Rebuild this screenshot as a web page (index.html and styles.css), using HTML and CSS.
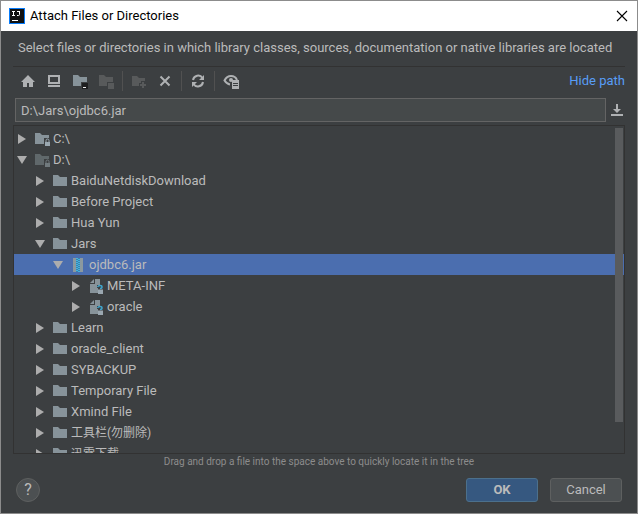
FILE: index.html
```html
<!DOCTYPE html>
<html lang="en">
<head>
<meta charset="utf-8">
<title>Attach Files or Directories</title>
<link rel="stylesheet" href="styles.css">
</head>
<body>
<svg class="defs" aria-hidden="true">
  <symbol id="folder" viewBox="0 0 16 16"><path d="M1 2h5l2 2h7v9H1z" fill="currentColor"/></symbol>
  <symbol id="drive" viewBox="0 0 16 16"><path d="M1 2h5l2 2h7v3h-5v6H1z" fill="currentColor"/><path d="M11 11h5v4h-5z" fill="var(--lock)"/><path d="M12 11V9.500a1.500 1.500 0 0 1 3 0V11" fill="none" stroke="var(--lock)"/></symbol>
  <symbol id="jar" viewBox="0 0 16 16"><path d="M3 1h3v14H3zM10 1h3v14h-3z" fill="#8b999f"/><path d="M6 1h4v14H6z" fill="#3d7fae"/><path d="M6 1h2v1H6zM8 2h2v1H8zM6 3h2v1H6zM8 4h2v1H8zM6 5h2v1H6zM8 6h2v1H8zM6 7h2v1H6zM8 8h2v1H8zM6 9h2v1H6zM8 10h2v1H8zM6 11h2v1H6zM8 12h2v1H8zM6 13h2v1H6zM8 14h2v1H8z" fill="#40b6e0"/></symbol>
  <symbol id="entry" viewBox="0 0 16 16"><path d="M7 1h5v6H9v3h1v5H2V6h5z" fill="#87939a"/><path d="M2 5l4-4v4z" fill="#87939a"/><path d="M9.500 9c1-2 4.500-2 4.500 0 0 1-1 1.500-2 1.500" fill="none" stroke="#40a5cc" stroke-width="1.500"/><path d="M10 11.500h5V16h-5z" fill="#9aa7b0"/></symbol>
  <symbol id="right" viewBox="0 0 10 10"><path d="M1 0l8 5-8 5z" fill="#adadad"/></symbol>
  <symbol id="down" viewBox="0 0 10 10"><path d="M0 1h10L5 9z" fill="#adadad"/></symbol>
</svg>
<main class="dialog">
  <header class="titlebar">
    <svg class="logo" viewBox="0 0 16 16"><path fill="#087cfa" d="M0 0h16v16H0z"/><path fill="#111" d="M1 1h14v14H1z"/><path d="M3 3.500h3M4.500 3v5M3 7.500h3M8 3.500h3M10.500 3v3.500q0 1-1 1H8" fill="none" stroke="#fff"/><path d="M3 12h6v1H3z" fill="#fff"/></svg>
    <h1 class="title">Attach Files or Directories</h1>
    <button class="close" aria-label="Close"><svg viewBox="0 0 12 12"><path d="M1 1l10 10M11 1L1 11" stroke="#000" stroke-width="1.100"/></svg></button>
  </header>
  <div class="content">
    <p class="description">Select files or directories in which library classes, sources, documentation or native libraries are located</p>
    <nav class="toolbar" aria-label="File chooser">
      <button class="tool" aria-label="Home"><svg viewBox="0 0 16 16"><path d="M8 2l7 7h-2v5h-4v-4H7v4H3V9H1z" fill="currentColor"/></svg></button>
      <button class="tool" aria-label="Desktop"><svg viewBox="0 0 16 16"><path d="M2 2h12v9H2zM4 4v5h8V4zM2 12h12v2H2z" fill="currentColor" fill-rule="evenodd"/></svg></button>
      <button class="tool" aria-label="Project directory"><svg viewBox="0 0 16 16"><path d="M1 2h5l2 2h7v5H9v4H1z" fill="#87939a"/><path d="M10 10h6v6h-6z" fill="#1e1f20"/><path d="M11 14h3v1h-3z" fill="#eee"/></svg></button>
      <button class="tool" aria-label="Module directory" disabled><svg viewBox="0 0 16 16"><path d="M1 2h5l2 2h7v5H9v4H1zM10 10h6v6h-6z" fill="currentColor"/></svg></button>
      <span class="divider"></span>
      <button class="tool" aria-label="New folder" disabled><svg viewBox="0 0 16 16"><path d="M1 3h5l2 2h6v3h-4v2H8v3H1zM11 9h2v2h2v2h-2v2h-2v-2H9v-2h2z" fill="currentColor"/></svg></button>
      <button class="tool" aria-label="Delete"><svg viewBox="0 0 16 16"><path d="M3.500 3.500l9 9M12.500 3.500l-9 9" stroke="currentColor" stroke-width="2"/></svg></button>
      <span class="divider"></span>
      <button class="tool" aria-label="Refresh"><svg viewBox="0 0 16 16"><path d="M3 7a5.200 5.200 0 0 1 9.500-2M13 9a5.200 5.200 0 0 1-9.500 2" fill="none" stroke="currentColor" stroke-width="2"/><path d="M14 2v5H9zM2 14V9h5z" fill="currentColor"/></svg></button>
      <span class="divider"></span>
      <button class="tool" aria-label="Show hidden files"><svg viewBox="0 0 16 16"><path d="M7 11.500C4 11 2.500 9 1.500 7.500 3 4.500 5 3 8 3s5 1.500 6 4" fill="none" stroke="currentColor" stroke-width="2"/><circle cx="8" cy="7" r="2" fill="currentColor"/><path d="M9 7h7v9H9zM10 10v1h5v-1zM10 12v1h5v-1z" fill="currentColor" fill-rule="evenodd"/></svg></button>
      <a class="hide" href="#path">Hide path</a>
    </nav>
    <div class="path-row">
      <input id="path" class="path" aria-label="Path" value="D:\Jars\ojdbc6.jar">
      <button class="history" aria-label="Path history"><svg viewBox="0 0 14 14"><path d="M6 1h2v5h3l-4 4-4-4h3zM1 11h12v2H1z" fill="currentColor"/></svg></button>
    </div>
    <section class="tree-box">
      <ul class="tree" role="tree">
        <li class="row"><svg class="arrow"><use href="#right"/></svg><svg class="icon"><use href="#drive"/></svg>C:\</li>
        <li class="row"><svg class="arrow"><use href="#down"/></svg><svg class="icon dim"><use href="#drive"/></svg>D:\</li>
        <li class="row l1"><svg class="arrow"><use href="#right"/></svg><svg class="icon"><use href="#folder"/></svg>BaiduNetdiskDownload</li>
        <li class="row l1"><svg class="arrow"><use href="#right"/></svg><svg class="icon"><use href="#folder"/></svg>Before Project</li>
        <li class="row l1"><svg class="arrow"><use href="#right"/></svg><svg class="icon"><use href="#folder"/></svg>Hua Yun</li>
        <li class="row l1"><svg class="arrow"><use href="#down"/></svg><svg class="icon"><use href="#folder"/></svg>Jars</li>
        <li class="row l2 selected"><svg class="arrow"><use href="#down"/></svg><svg class="icon"><use href="#jar"/></svg>ojdbc6.jar</li>
        <li class="row l3"><svg class="arrow"><use href="#right"/></svg><svg class="icon"><use href="#entry"/></svg>META-INF</li>
        <li class="row l3"><svg class="arrow"><use href="#right"/></svg><svg class="icon"><use href="#entry"/></svg>oracle</li>
        <li class="row l1"><svg class="arrow"><use href="#right"/></svg><svg class="icon"><use href="#folder"/></svg>Learn</li>
        <li class="row l1"><svg class="arrow"><use href="#right"/></svg><svg class="icon"><use href="#folder"/></svg>oracle_client</li>
        <li class="row l1"><svg class="arrow"><use href="#right"/></svg><svg class="icon"><use href="#folder"/></svg>SYBACKUP</li>
        <li class="row l1"><svg class="arrow"><use href="#right"/></svg><svg class="icon"><use href="#folder"/></svg>Temporary File</li>
        <li class="row l1"><svg class="arrow"><use href="#right"/></svg><svg class="icon"><use href="#folder"/></svg>Xmind File</li>
        <li class="row l1 zh" lang="zh-CN"><svg class="arrow"><use href="#right"/></svg><svg class="icon"><use href="#folder"/></svg>工具栏(勿删除)</li>
        <li class="row l1 zh" lang="zh-CN"><svg class="arrow"><use href="#right"/></svg><svg class="icon"><use href="#folder"/></svg>迅雷下载</li>
      </ul>
      <span class="thumb"></span>
    </section>
    <p class="hint">Drag and drop a file into the space above to quickly locate it in the tree</p>
  </div>
  <footer class="actions">
    <button class="help" aria-label="Help">?</button>
    <button class="btn primary">OK</button>
    <button class="btn">Cancel</button>
  </footer>
</main>
</body>
</html>
```
FILE: styles.css
```css
* { box-sizing: border-box; }
body {
  margin: 0;
  font: 13px/20px Roboto, "Noto Sans CJK SC", sans-serif;
  color: #bbbbbb;
  background: #3c3f41;
}
button { padding: 0; border: 0; background: none; font: inherit; color: inherit; }
svg { display: block; flex: none; }
.defs { display: none; }
.dialog {
  display: flex;
  flex-direction: column;
  height: 100vh;
  border: 1px solid #8c8c8c;
  background: #3c3f41;
}
.titlebar {
  display: flex;
  align-items: center;
  flex: none;
  height: 30px;
  padding: 0 9px 0 8px;
  gap: 5px;
  background: #fff;
  color: #000;
}
.logo { width: 16px; height: 16px; }
.title { flex: 1; margin: 0; font-size: 13px; font-weight: 400; }
.close svg { width: 12px; height: 12px; }
.content {
  display: flex;
  flex-direction: column;
  flex: 1;
  min-height: 0;
  padding: 0 12px;
}
.description {
  flex: none;
  margin: 0;
  height: 36px;
  padding: 7px 5px 0;
  border-bottom: 1px solid #323232;
  white-space: nowrap;
}
.toolbar { display: flex; align-items: center; flex: none; height: 28px; padding-left: 7px; gap: 10px; }
.tool { color: #afb1b3; }
.tool:disabled { color: #585a5b; }
.tool svg { width: 16px; height: 16px; }
.divider { width: 1px; height: 20px; margin: 0 -2px; background: #515151; }
.hide { margin-left: auto; color: #589df6; text-decoration: none; }
.path-row { display: flex; align-items: center; flex: none; height: 30px; padding: 0 1px 0 2px; gap: 4px; }
.path {
  flex: 1;
  min-width: 0;
  height: 24px;
  padding: 0 5px;
  border: 1px solid #646464;
  background: #45494a;
  color: #bbbbbb;
  font: inherit;
}
.history { color: #afb1b3; }
.history svg { width: 14px; height: 14px; }
.tree-box {
  display: flex;
  flex: 1;
  min-height: 0;
  overflow: hidden;
  border: 1px solid #323232;
}
.tree { flex: 1; margin: 0; padding: 2px 0 0; list-style: none; }
.row {
  display: flex;
  align-items: center;
  height: 21px;
  padding-left: 3px;
  white-space: nowrap;
}
.l1 { padding-left: 21px; }
.l2 { padding-left: 39px; }
.l3 { padding-left: 57px; }
.zh { font-size: 12px; }
.selected { background: #4b6eaf; }
.arrow { width: 10px; height: 10px; margin-right: 7px; }
.icon { width: 16px; height: 16px; margin-right: 3px; color: #87939a; --lock: #9aa7b0; }
.dim { color: #60686b; --lock: #717a7e; }
.thumb { width: 8px; height: 90%; margin: 2px 1px 0 -9px; background: #595b5d; }
.hint { flex: none; margin: 0; font-size: 10px; line-height: 16px; text-align: center; color: #8c8c8c; }
.actions { display: flex; align-items: center; flex: none; gap: 12px; padding: 6px 15px 10px; height: 43px; }
.help {
  width: 24px;
  height: 24px;
  margin-right: auto;
  border: 1px solid #5e6060;
  border-radius: 50%;
  background: #4c5052;
  font-size: 16px;
}
.btn {
  width: 72px;
  height: 24px;
  border: 1px solid #5e6060;
  border-radius: 3px;
  background: #4c5052;
}
.primary { border-color: #4c708c; background: #365880; font-weight: 700; }
```
